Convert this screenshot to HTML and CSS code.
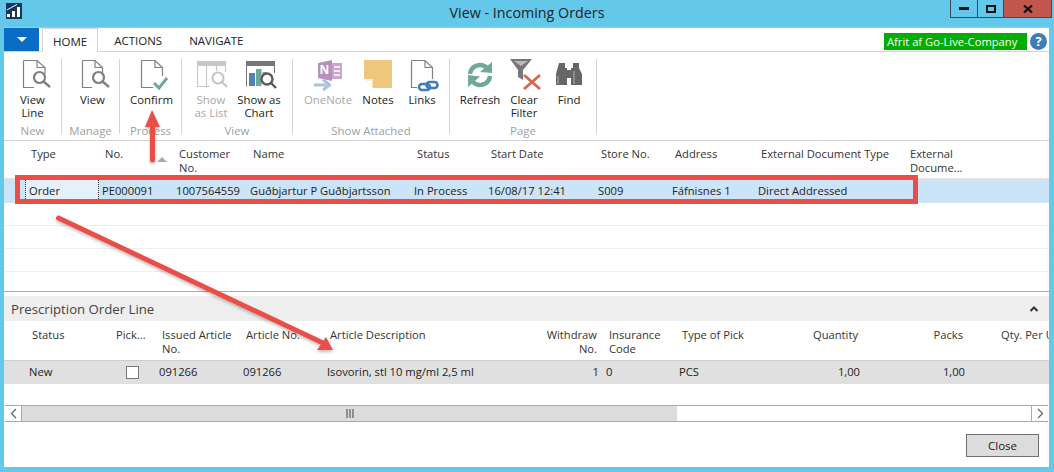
FILE: index.html
```html
<!DOCTYPE html>
<html lang="en">
<head>
<meta charset="utf-8">
<title>View - Incoming Orders</title>
<link rel="stylesheet" href="styles.css">
</head>
<body>
<header class="titlebar">
  <div class="title-left">
    <svg class="app-icon" width="16" height="16" viewBox="0 0 16 16"><rect width="16" height="16" fill="#17365d"/><path d="M1 14V11H4V14ZM6 14V8H9V14ZM11 14V4H14V14Z" fill="#fff"/><path d="M1 7L7 3.5L11 1.5" stroke="#fff" fill="none"/></svg>
  </div>
  <div class="title-text">View - Incoming Orders</div>
  <div class="controls">
    <div class="ctl ctl-min"><svg width="10" height="3" viewBox="0 0 10 3"><rect width="10" height="3" fill="#111"/></svg></div>
    <div class="ctl ctl-max"><svg width="10" height="8" viewBox="0 0 10 8"><rect x="1" y="1" width="8" height="6" fill="none" stroke="#111" stroke-width="2"/></svg></div>
    <div class="ctl ctl-close"><svg width="10" height="8" viewBox="0 0 10 8"><path d="M1 0.5L9 7.5M9 0.5L1 7.5" stroke="#111" stroke-width="2.2" fill="none"/></svg></div>
  </div>
</header>

<main class="window">
  <nav class="tabs">
    <div class="file-btn"><svg width="10" height="5" viewBox="0 0 10 5"><path d="M0 0H10L5 5Z" fill="#fff"/></svg></div>
    <div class="tab tab-active">HOME</div>
    <div class="tab">ACTIONS</div>
    <div class="tab">NAVIGATE</div>
    <div class="badge">Afrit af Go-Live-Company</div>
    <div class="help">?</div>
  </nav>

  <section class="ribbon">
    <div class="group g-new">
      <div class="btns">
        <div class="rb w57">
          <svg width="32" height="32" viewBox="0 0 32 32"><path d="M6.500 1.500H20L28 8.500V15M6.500 1.500V28.500H17M20 1.500V8.500H28" fill="none" stroke="#808080" stroke-width="1.200"/><circle cx="22.500" cy="18.500" r="5.500" fill="#fff" stroke="#808080" stroke-width="2.200"/><path d="M26.500 22.500L33 28" stroke="#808080" stroke-width="2.400"/></svg>
          <span>View<br>Line</span>
        </div>
      </div>
      <div class="glabel">New</div>
    </div>
    <div class="group g-manage">
      <div class="btns">
        <div class="rb w57">
          <svg width="32" height="32" viewBox="0 0 32 32"><path d="M5.500 1.500H18L25.500 8.500V14M5.500 1.500V28.500H15M18 1.500V8.500H25.500" fill="none" stroke="#808080" stroke-width="1.200"/><circle cx="21.500" cy="18.500" r="5.500" fill="#fff" stroke="#808080" stroke-width="2.200"/><path d="M25.500 22.500L32 28" stroke="#808080" stroke-width="2.400"/></svg>
          <span>View</span>
        </div>
      </div>
      <div class="glabel">Manage</div>
    </div>
    <div class="group g-process">
      <div class="btns">
        <div class="rb w61">
          <svg width="32" height="32" viewBox="0 0 32 32"><path d="M5.500 1.500H19L26.500 8.500V17M5.500 1.500V28.500H17M19 1.500V8.500H26.500" fill="none" stroke="#808080" stroke-width="1.200"/><path d="M18 24L23 29L31 19" fill="none" stroke="#6fa898" stroke-width="3"/></svg>
          <span>Confirm</span>
        </div>
      </div>
      <div class="glabel">Process</div>
    </div>
    <div class="group g-view">
      <div class="btns">
        <div class="rb w48 off">
          <svg width="32" height="32" viewBox="-1 0 32 32"><rect x="1" y="2" width="29" height="5" fill="#c8c8c8"/><path d="M1.500 7V27.500H14M10.500 7V27.500M20.500 7V12M29.500 7V13" fill="none" stroke="#c8c8c8" stroke-width="1.200"/><circle cx="22" cy="19" r="5.500" fill="#fff" stroke="#c8c8c8" stroke-width="2.200"/><path d="M26 23L31 28" stroke="#c8c8c8" stroke-width="2.400"/></svg>
          <span>Show<br>as List</span>
        </div>
        <div class="rb w48">
          <svg width="32" height="32" viewBox="-1 0 32 32"><rect x="2" y="2" width="29" height="5" fill="#777"/><path d="M2.500 7V27.500M30.500 7V14" fill="none" stroke="#777"/><rect x="5" y="14" width="6" height="13" fill="#4f81bd"/><rect x="12" y="10" width="5.500" height="17" fill="#6fa898"/><rect x="18.500" y="13" width="4" height="8" fill="#999"/><circle cx="23" cy="20" r="5.500" fill="#fff" stroke="#5a5a5a" stroke-width="2.400"/><path d="M27 24L32 29" stroke="#5a5a5a" stroke-width="2.400"/></svg>
          <span>Show as<br>Chart</span>
        </div>
      </div>
      <div class="glabel">View</div>
    </div>
    <div class="group g-attached">
      <div class="btns">
        <div class="rb w50 off">
          <svg width="32" height="32" viewBox="0 0 32 32"><path d="M6 4L20 1V22L6 19Z" fill="#b98fbd"/><rect x="20" y="4" width="10" height="16" fill="#c9a6cc"/><path d="M22 8H28M22 12H28M22 16H28" stroke="#fff" stroke-width="1.500"/><text x="12.500" y="15" text-anchor="middle" class="one-n">N</text><path d="M2 26H14" stroke="#a9c4e0" stroke-width="3"/><path d="M11 20.500L17.500 26L11 31" fill="none" stroke="#a9c4e0" stroke-width="3"/></svg>
          <span>OneNote</span>
        </div>
        <div class="rb w50">
          <svg width="32" height="32" viewBox="0 0 32 32"><path d="M2 1H30V29H11L2 20Z" fill="#eec77c"/><path d="M2 20H11V29Z" fill="#fff"/><path d="M3.500 21H10.500V28" fill="none" stroke="#f5deb0"/></svg>
          <span>Notes</span>
        </div>
        <div class="rb w38">
          <svg width="32" height="32" viewBox="0 0 32 32"><path d="M5.500 1.500H19L26.500 8.500V20M5.500 1.500V28.500H11M19 1.500V8.500H26.500" fill="none" stroke="#808080" stroke-width="1.200"/><rect x="13" y="25" width="11" height="6" rx="3" fill="#fff" stroke="#3f7cb8" stroke-width="2.600"/><rect x="20.500" y="23" width="11" height="6" rx="3" fill="none" stroke="#3f7cb8" stroke-width="2.600"/></svg>
          <span>Links</span>
        </div>
      </div>
      <div class="glabel">Show Attached</div>
    </div>
    <div class="group g-page">
      <div class="btns">
        <div class="rb w44">
          <svg width="32" height="32" viewBox="0 0 32 32"><path d="M6 15A10 10 0 0 1 23 9" fill="none" stroke="#6fa898" stroke-width="4.500"/><path d="M28 3V14L16 13Z" fill="#6fa898"/><path d="M26 17A10 10 0 0 1 9 23" fill="none" stroke="#6fa898" stroke-width="4.500"/><path d="M4 16L16 17.500L4 28Z" fill="#6fa898"/></svg>
          <span>Refresh</span>
        </div>
        <div class="rb w44">
          <svg width="32" height="32" viewBox="0 0 32 32"><path d="M2 0H24L15 11V21L10 18V11Z" fill="#777"/><path d="M6 2H20L13 7Z" fill="#bbb"/><path d="M16 16L32 30M32 16L16 30" stroke="#d9644f" stroke-width="2.800"/></svg>
          <span>Clear<br>Filter</span>
        </div>
        <div class="rb w46">
          <svg width="32" height="32" viewBox="0 0 32 32"><path d="M6 4H12V9H14V26H3V15ZM20 4H26V9L29 15V26H18V9H20ZM14 11H18V19H14Z" fill="#666"/><path d="M5 17V25M21 12V25" stroke="#fff" stroke-opacity=".5"/></svg>
          <span>Find</span>
        </div>
      </div>
      <div class="glabel">Page</div>
    </div>
  </section>

  <section class="list">
    <div class="hdr cols-main">
      <div>Type</div><div class="sort-cell">No.<span class="sort"></span></div><div>Customer<br>No.</div><div>Name</div><div>Status</div><div>Start Date</div><div>Store No.</div><div>Address</div><div>External Document Type</div><div>External<br>Docume...</div>
    </div>
    <div class="row row-sel cols-main">
      <div class="cell-focus">Order</div><div>PE000091</div><div>1007564559</div><div>Guðbjartur P Guðbjartsson</div><div>In Process</div><div>16/08/17 12:41</div><div>S009</div><div>Fáfnisnes 1</div><div>Direct Addressed</div><div></div>
    </div>
    <div class="empty"></div>
    <div class="empty"></div>
    <div class="empty"></div>
  </section>

  <section class="part">
    <div class="part-head">
      <span>Prescription Order Line</span>
      <svg width="8" height="6" viewBox="0 0 8 6"><path d="M0.500 5L4 1.500L7.500 5" fill="none" stroke="#333" stroke-width="2"/></svg>
    </div>
    <div class="hdr cols-sub">
      <div>Status</div><div>Pick...</div><div>Issued Article<br>No.</div><div>Article No.</div><div>Article Description</div><div class="num">Withdraw<br>No.</div><div>Insurance<br>Code</div><div>Type of Pick</div><div class="num">Quantity</div><div class="num">Packs</div><div class="qty">Qty. Per Unit</div>
    </div>
    <div class="row row-grey cols-sub">
      <div>New</div><div><span class="check"></span></div><div>091266</div><div>091266</div><div>Isovorin, stl 10 mg/ml 2,5 ml</div><div class="num">1</div><div>0</div><div>PCS</div><div class="num">1,00</div><div class="num">1,00</div><div></div>
    </div>
    <div class="sub-empty"></div>
    <div class="scrollbar">
      <div class="sb-btn"><svg width="7" height="11" viewBox="0 0 7 11"><path d="M6 1L1.500 5.500L6 10" fill="none" stroke="#666" stroke-width="1.300"/></svg></div>
      <div class="sb-thumb"><svg width="8" height="9" viewBox="0 0 8 9"><path d="M1 0V9M4 0V9M7 0V9" stroke="#666" stroke-width="1.300"/></svg></div>
      <div class="sb-track"></div>
      <div class="sb-btn sb-right"><svg width="7" height="11" viewBox="0 0 7 11"><path d="M1 1L5.500 5.500L1 10" fill="none" stroke="#666" stroke-width="1.300"/></svg></div>
    </div>
  </section>

  <footer class="footer"><div class="close-btn">Close</div></footer>
</main>

<svg class="overlay" width="1054" height="472" viewBox="0 0 1054 472">
  <defs><filter id="sh" x="-10%" y="-10%" width="120%" height="130%"><feDropShadow dx="0" dy="2" stdDeviation="1.500" flood-color="#000" flood-opacity=".25"/></filter></defs>
  <rect x="17.500" y="177.500" width="898" height="24" fill="none" stroke="#e94f4a" stroke-width="5"/>
  <g filter="url(#sh)">
    <path d="M152.500 160V124" stroke="#e94f4a" stroke-width="5" stroke-linecap="round"/>
    <path d="M152 110L160 127H145Z" fill="#e94f4a"/>
    <path d="M58.500 218L323 343" stroke="#e94f4a" stroke-width="5" stroke-linecap="round"/>
    <path d="M333 350L317 350L326 337Z" fill="#e94f4a"/>
  </g>
</svg>
</body>
</html>
```

FILE: styles.css
```css
* { box-sizing: border-box; }
html, body { margin: 0; padding: 0; }
body {
  position: relative;
  width: 1054px;
  height: 472px;
  overflow: hidden;
  background: #63c8ea;
  font-family: "Open Sans", "Noto Sans", "Liberation Sans", sans-serif;
  font-size: 11.2px;
  color: #222;
}

/* Title bar */
.titlebar {
  height: 27px;
  display: grid;
  grid-template-columns: 1fr auto 1fr;
  align-items: start;
}
.title-left { padding: 3px 0 0 6px; }
.app-icon { display: block; }
.title-text { font-size: 14.300px; line-height: 26px; color: #222; }
.controls { justify-self: end; display: flex; margin-right: 2px; }
.ctl {
  height: 18px;
  border: 1px solid #3b4a52;
  border-top: 0;
  display: flex;
  align-items: center;
  justify-content: center;
}
.ctl + .ctl { border-left: 0; }
.ctl-min { width: 28px; }
.ctl-max { width: 26px; }
.ctl-close { width: 48px; background: #c0564e; }

/* Window */
.window {
  margin: 0 5px 0 4px;
  height: 440px;
  background: #fff;
  display: flex;
  flex-direction: column;
}

/* Tabs */
.tabs {
  height: 25px;
  flex: none;
  display: flex;
  align-items: flex-start;
  gap: 5px;
  border-top: 1px solid #a9c6d4;
  border-bottom: 1px solid #d4d4d4;
  font-size: 11.500px;
}
.file-btn {
  width: 35px;
  height: 23px;
  margin-right: -2px;
  background: #0b6cc4;
  display: flex;
  align-items: center;
  justify-content: center;
}
.tab { padding: 0 11px; line-height: 26px; height: 24px; color: #222; }
.tab-active {
  background: #fff;
  border: 1px solid #d4d4d4;
  border-bottom: 0;
  line-height: 26px;
  padding: 0 10px;
}
.badge {
  margin: 5px 0 0 auto;
  width: 143px;
  height: 17px;
  background: #00ad00;
  color: #fff;
  font-size: 11.200px;
  line-height: 17px;
  padding-left: 3px;
}
.help {
  width: 17px;
  height: 17px;
  margin: 5px 2px 0 -2px;
  border-radius: 50%;
  background: #3f7cb8;
  color: #fff;
  font-size: 13px;
  font-weight: 700;
  line-height: 17px;
  text-align: center;
}
.one-n { font-size: 12px; font-weight: 700; fill: #fff; }

/* Ribbon */
.ribbon {
  height: 89px;
  flex: none;
  display: flex;
  padding-top: 7px;
  border-bottom: 1px solid #d4d4d4;
  font-size: 11.400px;
}
.group {
  height: 75px;
  display: flex;
  flex-direction: column;
  border-right: 1px solid #d4d4d4;
  flex: none;
}
.g-new { width: 58px; }
.g-manage { width: 58px; padding-left: 2px; }
.g-process { width: 62px; padding-left: 1px; }
.g-view { width: 111px; padding-left: 5px; }
.g-attached { width: 157px; padding-left: 10px; }
.g-page { width: 147px; padding-left: 8px; }
.btns { display: flex; flex: 1; min-height: 0; }
.rb { text-align: center; line-height: 13px; color: #222; flex: none; }
.rb svg { display: block; margin: 0 auto 2px; overflow: visible; }
.rb span { display: block; white-space: nowrap; }
.rb.off { color: #a8a8a8; }
.w38 { width: 38px; }
.w44 { width: 44px; }
.w46 { width: 46px; }
.w48 { width: 48px; }
.w50 { width: 50px; }
.w57 { width: 57px; }
.w61 { width: 61px; }
.glabel {
  text-align: center;
  line-height: 14px;
  margin-bottom: -4px;
  color: #a0a0a0;
  white-space: nowrap;
}
.g-manage .glabel { margin-left: -2px; }
.g-process .glabel { margin-left: -1px; }
.g-view .glabel { margin-left: -5px; }
.g-attached .glabel { margin-left: -10px; }
.g-page .glabel { margin-left: -8px; }

/* Shared table rows */
.cols-main {
  display: grid;
  grid-template-columns: 74px 74px 74px 164px 74px 110px 74px 86px 149px 120px;
  padding-left: 21px;
}
.cols-sub {
  display: grid;
  grid-template-columns: 84px 46px 84px 84px 206px 73px 73px 112px 76px 105px 110px;
  padding-left: 22px;
}
.hdr { color: #333; line-height: 14px; white-space: nowrap; overflow: hidden; }
.hdr > div { padding-left: 6px; }
.hdr > .num { padding: 0 6px 0 0; text-align: right; }
.hdr > .qty { padding-left: 32px; }
.row { line-height: 23px; white-space: nowrap; overflow: hidden; color: #222; }
.row > div { padding-left: 3px; }
.row > .num { padding: 0 4px 0 0; text-align: right; }
.sort-cell { position: relative; }
.sort {
  position: absolute;
  left: 58px;
  top: 10px;
  width: 0;
  height: 0;
  border-left: 5px solid transparent;
  border-right: 5px solid transparent;
  border-bottom: 5px solid #aaa;
}

/* Upper list */
.list {
  height: 151px;
  flex: none;
  border-bottom: 1px solid #aaa;
}
.list .hdr { height: 38px; padding-top: 6px; border-bottom: 1px solid #e4e4e4; }
.row-sel { height: 24px; background: #cce4f7; }
.cell-focus { background: #e4f0fa; border: 1px dotted #333; line-height: 22px; }
.empty { height: 23px; border-bottom: 1px solid #eee; }

/* Lower part */
.part { margin-top: 4px; flex: none; }
.part-head {
  height: 25px;
  background: #eee;
  display: flex;
  align-items: center;
  justify-content: space-between;
  padding: 0 11px 0 7px;
  font-size: 13.200px;
  color: #444;
}
.part .hdr { height: 38px; margin-top: 2px; padding-top: 5px; border-bottom: 1px solid #ccc; }
.row-grey { height: 23px; background: #e0e0e0; line-height: 22px; }
.check {
  display: block;
  width: 13px;
  height: 13px;
  margin: 5px 0 0 13px;
  background: #fff;
  border: 1px solid #777;
}
.sub-empty { height: 21px; }
.scrollbar {
  height: 17px;
  margin: 0 1px;
  display: flex;
  border-top: 1px solid #aaa;
  border-bottom: 1px solid #aaa;
  background: #fff;
}
.sb-btn {
  width: 17px;
  flex: none;
  display: flex;
  align-items: center;
  justify-content: center;
  background: #fff;
  border-right: 1px solid #aaa;
}
.sb-right { border-right: 0; border-left: 1px solid #aaa; }
.sb-thumb {
  width: 655px;
  flex: none;
  background: #dcdcdc;
  display: flex;
  align-items: center;
  justify-content: center;
}
.sb-track { flex: 1; }

/* Footer */
.footer { flex: 1; display: flex; justify-content: flex-end; padding: 12px 10px 0 0; }
.close-btn {
  width: 73px;
  height: 23px;
  background: #dcdcdc;
  border: 1px solid #707070;
  text-align: center;
  line-height: 21px;
  font-size: 11.500px;
}

/* Annotations drawn over the screenshot */
.overlay { position: absolute; left: 0; top: 0; pointer-events: none; }
```
